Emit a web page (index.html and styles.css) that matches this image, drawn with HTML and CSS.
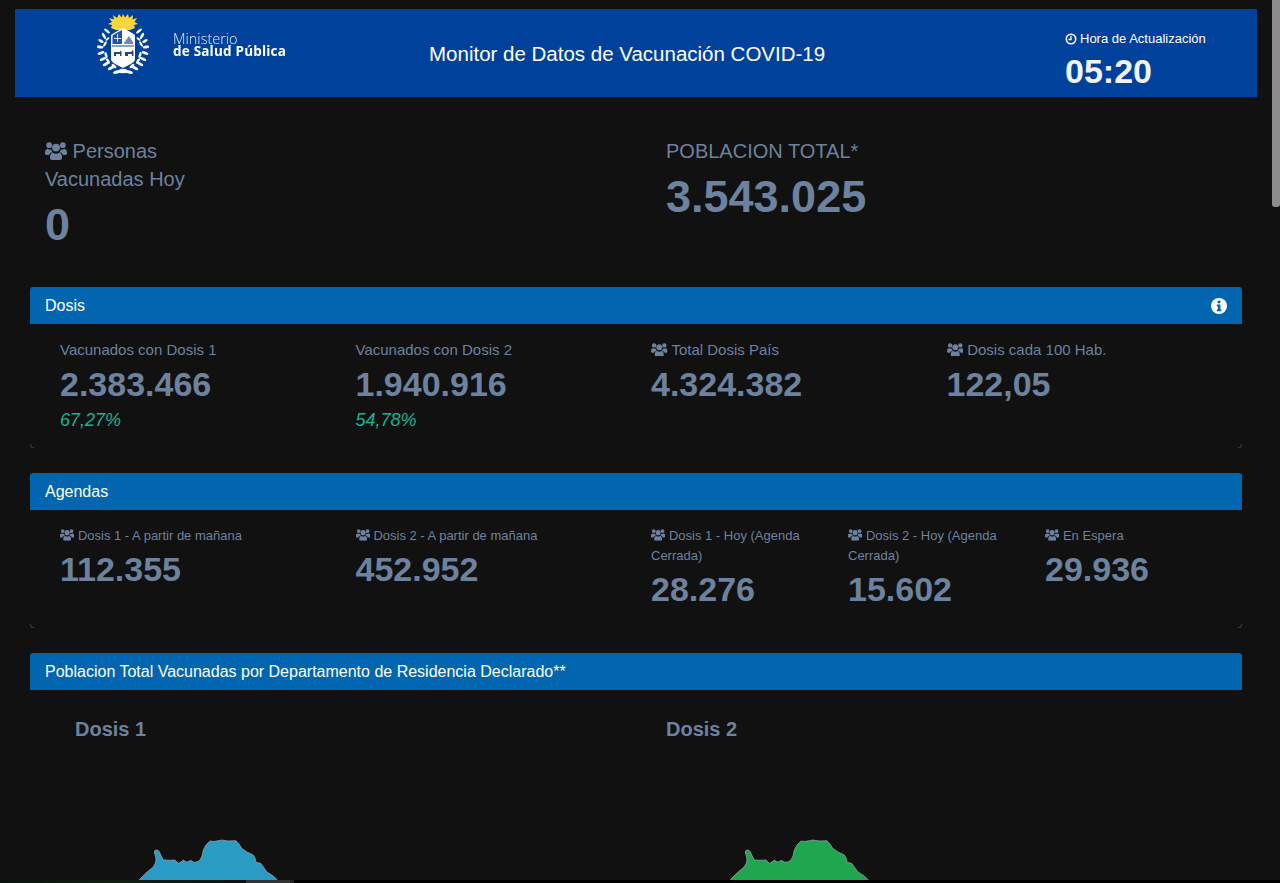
FILE: index.html
```html
<!DOCTYPE html>
<html lang="es">
<head>
<meta charset="utf-8">
<title>Monitor de Datos de Vacunación COVID-19</title>
<link rel="stylesheet" href="styles.css">
</head>
<body>
<svg class="defs" width="0" height="0" aria-hidden="true">
  <symbol id="users" viewBox="0 0 22 18">
    <g fill="currentColor">
      <circle cx="4.200" cy="3.200" r="2.900"/>
      <circle cx="17.800" cy="3.200" r="2.900"/>
      <circle cx="11" cy="5.600" r="3.900"/>
      <path d="M0 11C0 8 1 6.800 3 7C4 7.600 5 7.600 6.200 7.400C6.400 8.600 7 9.600 7.800 10.200C5.800 10.400 4.600 11.400 4 13H1.400C.5 13 0 12.200 0 11z"/>
      <path d="M22 11C22 8 21 6.800 19 7C18 7.600 17 7.600 15.800 7.400C15.600 8.600 15 9.600 14.200 10.200C16.200 10.400 17.400 11.400 18 13H20.600C21.500 13 22 12.200 22 11z"/>
      <path d="M5 16C5 12.500 6 10.800 8 10.800C9.800 12 12.200 12 14 10.800C16 10.800 17 12.500 17 16C17 17.200 16.200 18 15 18H7C5.800 18 5 17.200 5 16z"/>
    </g>
  </symbol>
  <symbol id="wreath" viewBox="0 0 52 62">
    <g fill="#fff">
      <ellipse cx="10" cy="17" rx="3.500" ry="1.200" transform="rotate(40 10 17)"/>
      <ellipse cx="7" cy="22" rx="3.500" ry="1.300" transform="rotate(60 7 22)"/>
      <ellipse cx="10.500" cy="25" rx="2.500" ry="1" transform="rotate(-40 10.500 25)"/>
      <ellipse cx="4" cy="27" rx="3" ry="1.300" transform="rotate(30 4 27)"/>
      <ellipse cx="8" cy="30" rx="3" ry="1.200" transform="rotate(-60 8 30)"/>
      <ellipse cx="3" cy="33" rx="3.500" ry="1.400" transform="rotate(10 3 33)"/>
      <ellipse cx="4" cy="39" rx="3.500" ry="1.400" transform="rotate(-20 4 39)"/>
      <ellipse cx="9" cy="41" rx="3" ry="1.300" transform="rotate(70 9 41)"/>
      <ellipse cx="6" cy="45" rx="3.500" ry="1.400" transform="rotate(-25 6 45)"/>
      <ellipse cx="11" cy="47" rx="3" ry="1.300" transform="rotate(55 11 47)"/>
      <ellipse cx="9" cy="50" rx="3.500" ry="1.400" transform="rotate(-30 9 50)"/>
      <ellipse cx="14" cy="54" rx="3.500" ry="1.500" transform="rotate(-30 14 54)"/>
      <ellipse cx="17" cy="52" rx="3" ry="1.300" transform="rotate(40 17 52)"/>
      <ellipse cx="20" cy="58" rx="4" ry="1.600" transform="rotate(-15 20 58)"/>
      <ellipse cx="25" cy="57" rx="3" ry="2.200"/>
    </g>
  </symbol>
</svg>

<div class="page">
  <header class="topbar">
    <div class="brand">
      <svg class="shield" viewBox="0 0 52 62" aria-hidden="true">
        <path fill="#fbd63a" d="M15 11 11 10 15 8 12 4 17 5.500 16 1 20 4 22 0 24.500 3.500 26 0 28 3.500 31 0 32 4 36 1 35.500 5.500 40 4 37.500 8 41 10 37 11 38 14 33 16H19L14 14Z"/>
        <use href="#wreath" width="52" height="62"/>
        <use href="#wreath" width="52" height="62" transform="matrix(-1 0 0 1 52 0)"/>
        <path fill="#fff" d="M14 21C18 18 22 16 26 14C30 16 34 18 38 21V45C38 49 31 51 26 54C21 51 14 49 14 45z"/>
        <path fill="#1a55a8" d="M15.500 21.500C19 19 22 17.500 25 16V30H15.500z"/>
        <path fill="#d8e1ee" d="M17 24h7v1h-7zM20 20h1v8h-1z"/>
        <path fill="#6c88b5" d="M27 29l5-7 4.500 7v1H27z"/>
        <path fill="#0d429b" d="M15 31.500h22v1H15z"/>
        <path fill="#27477f" d="M17 38h6l1-2 .5 2v4h-1.500v-2h-4v2H17zM28 38h6l2-2 .5 2v4h-1.500v-2h-4v2H28z"/>
      </svg>
      <div class="brand-text">
        <span class="brand-top">Ministerio</span>
        <span class="brand-bottom">de Salud Pública</span>
      </div>
    </div>
    <h1 class="title">Monitor de Datos de Vacunación COVID-19</h1>
    <div class="clock">
      <div class="clock-label">
        <svg class="clock-icon" viewBox="0 0 12 12" aria-hidden="true"><circle cx="6" cy="6" r="4.700" fill="none" stroke="currentColor" stroke-width="1.600"/><path d="M6 3v3.500H3.500" fill="none" stroke="currentColor" stroke-width="1.300"/></svg>
        Hora de Actualización
      </div>
      <div class="clock-time">05:20</div>
    </div>
  </header>

  <section class="hero">
    <div class="hero-col">
      <div class="hero-label"><svg class="ico"><use href="#users"/></svg> Personas<br>Vacunadas Hoy</div>
      <div class="hero-num">0</div>
    </div>
    <div class="hero-col">
      <div class="hero-label">POBLACION TOTAL*</div>
      <div class="hero-num">3.543.025</div>
    </div>
  </section>

  <section class="card card-dose">
    <div class="card-head">
      <span>Dosis</span>
      <svg class="info" viewBox="0 0 16 16" aria-hidden="true"><circle cx="8" cy="8" r="8" fill="#fff"/><path fill="#0265b0" d="M6.600 2.800h2.800v2.400H6.600zM5.800 6.400h3.600v5h1v1.800H5.800v-1.800h1v-3.200h-1z"/></svg>
    </div>
    <div class="dose-grid">
      <div class="stat">
        <div class="stat-label">Vacunados con Dosis 1</div>
        <div class="stat-num">2.383.466</div>
        <div class="stat-pct">67,27%</div>
      </div>
      <div class="stat">
        <div class="stat-label">Vacunados con Dosis 2</div>
        <div class="stat-num">1.940.916</div>
        <div class="stat-pct">54,78%</div>
      </div>
      <div class="stat">
        <div class="stat-label"><svg class="ico"><use href="#users"/></svg> Total Dosis País</div>
        <div class="stat-num">4.324.382</div>
      </div>
      <div class="stat">
        <div class="stat-label"><svg class="ico"><use href="#users"/></svg> Dosis cada 100 Hab.</div>
        <div class="stat-num">122,05</div>
      </div>
    </div>
  </section>

  <section class="card card-agenda">
    <div class="card-head"><span>Agendas</span></div>
    <div class="agenda-grid">
      <div class="stat agenda">
        <div class="agenda-label"><svg class="ico"><use href="#users"/></svg> Dosis 1 - A partir de mañana</div>
        <div class="agenda-num">112.355</div>
      </div>
      <div class="stat agenda">
        <div class="agenda-label"><svg class="ico"><use href="#users"/></svg> Dosis 2 - A partir de mañana</div>
        <div class="agenda-num">452.952</div>
      </div>
      <div class="agenda-sub">
        <div class="stat agenda">
          <div class="agenda-label"><svg class="ico"><use href="#users"/></svg> Dosis 1 - Hoy (Agenda Cerrada)</div>
          <div class="agenda-num">28.276</div>
        </div>
        <div class="stat agenda">
          <div class="agenda-label"><svg class="ico"><use href="#users"/></svg> Dosis 2 - Hoy (Agenda Cerrada)</div>
          <div class="agenda-num">15.602</div>
        </div>
        <div class="stat agenda">
          <div class="agenda-label"><svg class="ico"><use href="#users"/></svg> En Espera</div>
          <div class="agenda-num">29.936</div>
        </div>
      </div>
    </div>
  </section>

  <section class="card map-card">
    <div class="card-head"><span>Poblacion Total Vacunadas por Departamento de Residencia Declarado**</span></div>
    <div class="map-grid">
      <div class="map-col">
        <h2 class="map-title">Dosis 1</h2>
        <svg class="map map-blue" viewBox="0 0 141 45" aria-hidden="true">
          <path d="M-1 45 L2 42 L9 35 L16.300 28.700 L18.500 25 L19 21 L17.300 14 L18 12.300 L20.700 12 L22.500 14 L23.700 17 L26.300 22 L32 22.300 L38 22 L41.300 25.300 L44 24 L46.300 22 L48.500 23.500 L50.300 24 L52.500 22.700 L54.700 22.700 L56 24 L58 24.300 L61 23.500 L63 22 L65 18 L66.300 12 L69 7 L73 3 L77 3.500 L84.700 2 L91 3 L99 2.700 L102 6 L104.700 10.300 L110 14 L116.300 17 L118 20 L119 24.300 L123.700 25.300 L129.700 33.700 L136.300 38 L140.300 42 L143 45 Z"/>
        </svg>
      </div>
      <div class="map-col">
        <h2 class="map-title">Dosis 2</h2>
        <svg class="map map-green" viewBox="0 0 141 45" aria-hidden="true">
          <path d="M-1 45 L2 42 L9 35 L16.300 28.700 L18.500 25 L19 21 L17.300 14 L18 12.300 L20.700 12 L22.500 14 L23.700 17 L26.300 22 L32 22.300 L38 22 L41.300 25.300 L44 24 L46.300 22 L48.500 23.500 L50.300 24 L52.500 22.700 L54.700 22.700 L56 24 L58 24.300 L61 23.500 L63 22 L65 18 L66.300 12 L69 7 L73 3 L77 3.500 L84.700 2 L91 3 L99 2.700 L102 6 L104.700 10.300 L110 14 L116.300 17 L118 20 L119 24.300 L123.700 25.300 L129.700 33.700 L136.300 38 L140.300 42 L143 45 Z"/>
        </svg>
      </div>
    </div>
  </section>
</div>

<div class="scroll-thumb"></div>
<div class="bottom-strip"><div class="strip-tint"></div><div class="strip-patch"></div></div>
</body>
</html>
```

FILE: styles.css
```css
* { box-sizing: border-box; }
html, body { height: 883px; overflow: hidden; }
body {
  margin: 0;
  background: #111;
  color: #6c829f;
  font-family: "Liberation Sans", Arial, sans-serif;
}
.defs { position: absolute; }
.page { padding: 9px 23px 0 15px; }

.topbar {
  height: 88px;
  background: #00429b;
  display: flex;
  align-items: center;
  color: #fff;
}
.brand { width: 414px; padding-left: 82px; display: flex; align-items: center; height: 72px; margin-top: -16px; }
.shield { width: 52px; height: 62px; flex: none; filter: blur(0.400px); }
.brand-text { margin-left: 24px; display: flex; flex-direction: column; line-height: 13px; font-family: "Open Sans", sans-serif; filter: blur(0.250px); }
.brand-top { font-size: 14.500px; color: #e3ebf7; font-weight: 300; }
.brand-bottom { font-size: 13.500px; font-weight: 700; letter-spacing: 0.200px; }
.title { flex: 1; margin: 0; padding-top: 2px; font-size: 20.500px; font-weight: 400; line-height: 24px; }
.clock { width: 192px; padding-top: 16px; }
.clock-label { font-size: 13px; line-height: 16px; display: flex; align-items: center; gap: 3px; }
.clock-icon { width: 12px; height: 12px; }
.clock-time { font-size: 34px; font-weight: 700; line-height: 40px; margin-top: 4px; color: #f2f3f6; }

.hero { display: grid; grid-template-columns: 621px 1fr; padding: 40px 0 0 30px; height: 190px; }
.hero-label { font-size: 20px; line-height: 28px; }
.hero-num { font-size: 45px; font-weight: 700; line-height: 50px; margin-top: 7px; }
.ico { width: 1.100em; height: 0.900em; vertical-align: -0.080em; }

.card { margin: 0 0 25px 15px; width: 1212px; position: relative; border-radius: 3px; }
.card-dose { height: 161px; }
.card-agenda { height: 155px; }
.card-dose::before, .card-agenda::before,
.card-dose::after, .card-agenda::after {
  content: "";
  position: absolute;
  bottom: 0;
  width: 3px;
  height: 3px;
  border-bottom: 1px solid #3a3a3a;
}
.card-dose::before, .card-agenda::before { left: 0; border-left: 1px solid #3a3a3a; border-bottom-left-radius: 3px; }
.card-dose::after, .card-agenda::after { right: 0; border-right: 1px solid #3a3a3a; border-bottom-right-radius: 3px; }
.card-head {
  height: 37px;
  background: #0265b0;
  color: #fff;
  display: flex;
  align-items: center;
  justify-content: space-between;
  padding: 0 15px;
  font-size: 16px;
  border-radius: 3px 3px 0 0;
}
.info { width: 16px; height: 16px; }

.dose-grid { display: grid; grid-template-columns: repeat(4, 295.500px); padding: 16px 0 0 30px; }
.stat-label { font-size: 15px; line-height: 20px; }
.stat-num { font-size: 34px; font-weight: 700; line-height: 38px; margin-top: 5px; }
.stat-pct { font-size: 18px; font-style: italic; line-height: 20px; margin-top: 7px; color: #1ab394; }

.agenda-grid { display: grid; grid-template-columns: 295.500px 295.500px 1fr; padding: 16px 0 0 30px; }
.agenda-label { font-size: 13px; line-height: 20px; }
.agenda-num { font-size: 34px; font-weight: 700; line-height: 38px; margin-top: 4px; }
.agenda-sub { display: grid; grid-template-columns: 197px 197px 1fr; }
.agenda-sub .stat { padding-right: 30px; }

.map-card { height: 240px; }
.map-grid { display: grid; grid-template-columns: 591px 1fr; }
.map-col { height: 193px; padding: 27px 0 0 45px; }
.map-title { margin: 0; font-size: 20px; font-weight: 700; line-height: 24px; }
.map { display: block; width: 141px; height: 45px; margin: 97px 0 0 62px; stroke: #9aa9b3; stroke-width: 0.700; }
.map-blue { fill: #2a9cc4; }
.map-green { fill: #1fa64f; }

.scroll-thumb { position: fixed; top: 0; right: 0; width: 8px; height: 207px; background: #8c8c8c; border-radius: 0 0 3px 3px; }
.bottom-strip { position: fixed; left: 0; right: 0; bottom: 0; height: 3px; background: #000; }
.strip-tint { position: absolute; left: 0; top: 0; width: 246px; height: 3px; background: linear-gradient(90deg, #0a120c, #112013 50%, #0c0f0c); }
.strip-patch { position: absolute; left: 246px; top: 0; width: 48px; height: 3px; background: linear-gradient(90deg, #333 92%, #222 92%); }
```
